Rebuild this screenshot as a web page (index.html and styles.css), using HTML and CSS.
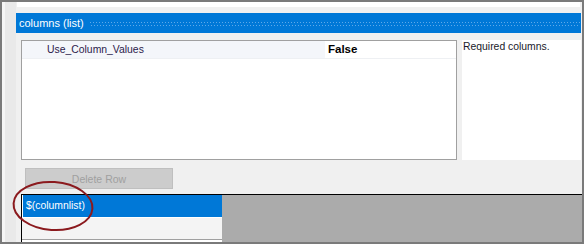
FILE: index.html
```html
<!DOCTYPE html>
<html>
<head>
<meta charset="utf-8">
<link rel="stylesheet" href="styles.css">
</head>
<body>
<div class="window">
  <div class="side"></div>
  <div class="main">
    <div class="topstrip"></div>
    <div class="header">
      <span class="title">columns (list)</span>
      <div class="dots"></div>
    </div>
    <div class="props">
      <div class="grid">
        <div class="prow">
          <div class="pname">Use_Column_Values</div>
          <div class="pval">False</div>
        </div>
      </div>
      <div class="desc">Required columns.</div>
    </div>
    <div class="btnrow">
      <button class="btn" disabled>Delete Row</button>
    </div>
    <div class="table">
      <div class="tcol">
        <div class="trow sel">$(columnlist)</div>
        <div class="trow alt"></div>
      </div>
      <div class="tgray"></div>
    </div>
  </div>
  <svg class="mark" width="84" height="54" viewBox="0 0 84 54">
    <ellipse cx="42" cy="27" rx="39.5" ry="24" transform="rotate(4 42 27)" fill="none" stroke="#8b1a1e" stroke-width="2"/>
  </svg>
</div>
</body>
</html>
```
FILE: styles.css
```css
html, body {
  margin: 0;
  padding: 0;
}
body {
  font-family: "Liberation Sans", Arial, sans-serif;
}
.window {
  position: relative;
  width: 584px;
  height: 244px;
  box-sizing: border-box;
  border: 2px solid #7a7a7a;
  background: #f0f0f0;
  display: flex;
  overflow: hidden;
}
.side {
  width: 14px;
  background: linear-gradient(90deg, #f5f5f5 0 3px, #e9e9e9 3px);
}
.main {
  flex: 1;
  display: flex;
  flex-direction: column;
  min-width: 0;
}
.topstrip {
  height: 5px;
  margin: 0 2px 0 1px;
  background: #fff;
}
.header {
  height: 20px;
  margin-top: 6px;
  margin-right: 1px;
  background: #0078d7;
  display: flex;
  align-items: flex-start;
}
.title {
  color: #fff;
  font-size: 11px;
  line-height: 20px;
  padding-left: 3px;
  white-space: nowrap;
}
.dots {
  flex: 1;
  height: 4px;
  margin: 9px 1px 0 6px;
  background:
    repeating-linear-gradient(90deg, #5ea9ea 0 1px, transparent 1px 3px) 0 0 / 100% 1px no-repeat,
    repeating-linear-gradient(90deg, #5ea9ea 0 1px, transparent 1px 3px) 1px 3px / 100% 1px no-repeat;
}
.props {
  margin-top: 7px;
  height: 120px;
  display: flex;
}
.grid {
  margin-left: 5px;
  width: 436px;
  box-sizing: border-box;
  border: 1px solid #a0a0a0;
  background: #fff;
}
.prow {
  height: 17px;
  display: flex;
  border-bottom: 1px solid #eef0f3;
}
.pname {
  width: 303px;
  box-sizing: border-box;
  padding-left: 25px;
  background: #f4f6fa;
  color: #2c1a4a;
  font-size: 10.4px;
  line-height: 17px;
}
.pval {
  flex: 1;
  padding-left: 3px;
  color: #000;
  font-size: 11.5px;
  font-weight: bold;
  line-height: 17px;
}
.desc {
  flex: 1;
  margin: 0 1px 0 5px;
  padding: 0 0 0 1px;
  background: #fff;
  color: #1a1a2a;
  font-size: 10.4px;
  line-height: 13px;
}
.btnrow {
  margin-top: 8px;
  height: 21px;
  display: flex;
}
.btn {
  margin: 0 0 0 9px;
  width: 148px;
  height: 21px;
  padding: 0;
  box-sizing: border-box;
  background: #cccccc;
  border: 1px solid #bfbfbf;
  border-radius: 0;
  color: #a0a0a0;
  font-family: "Liberation Sans", Arial, sans-serif;
  font-size: 10.5px;
}
.table {
  margin-top: 5px;
  margin-left: 5px;
  flex: 1;
  border-top: 1px solid #000;
  display: flex;
}
.tcol {
  width: 201px;
  box-sizing: border-box;
  border-left: 1px solid #000;
  background: #fff;
  display: flex;
  flex-direction: column;
}
.trow.sel {
  height: 22px;
  margin-left: 1px;
  padding-left: 3px;
  background: #0078d7;
  color: #fff;
  font-size: 10.4px;
  line-height: 22px;
}
.trow.alt {
  height: 21px;
  border-top: 1px solid #fff;
  border-bottom: 1px solid #a0a0a0;
  background: #f4f4f4;
}
.tgray {
  flex: 1;
  background: #ababab;
}
.mark {
  position: absolute;
  left: 9px;
  top: 177px;
}
```
